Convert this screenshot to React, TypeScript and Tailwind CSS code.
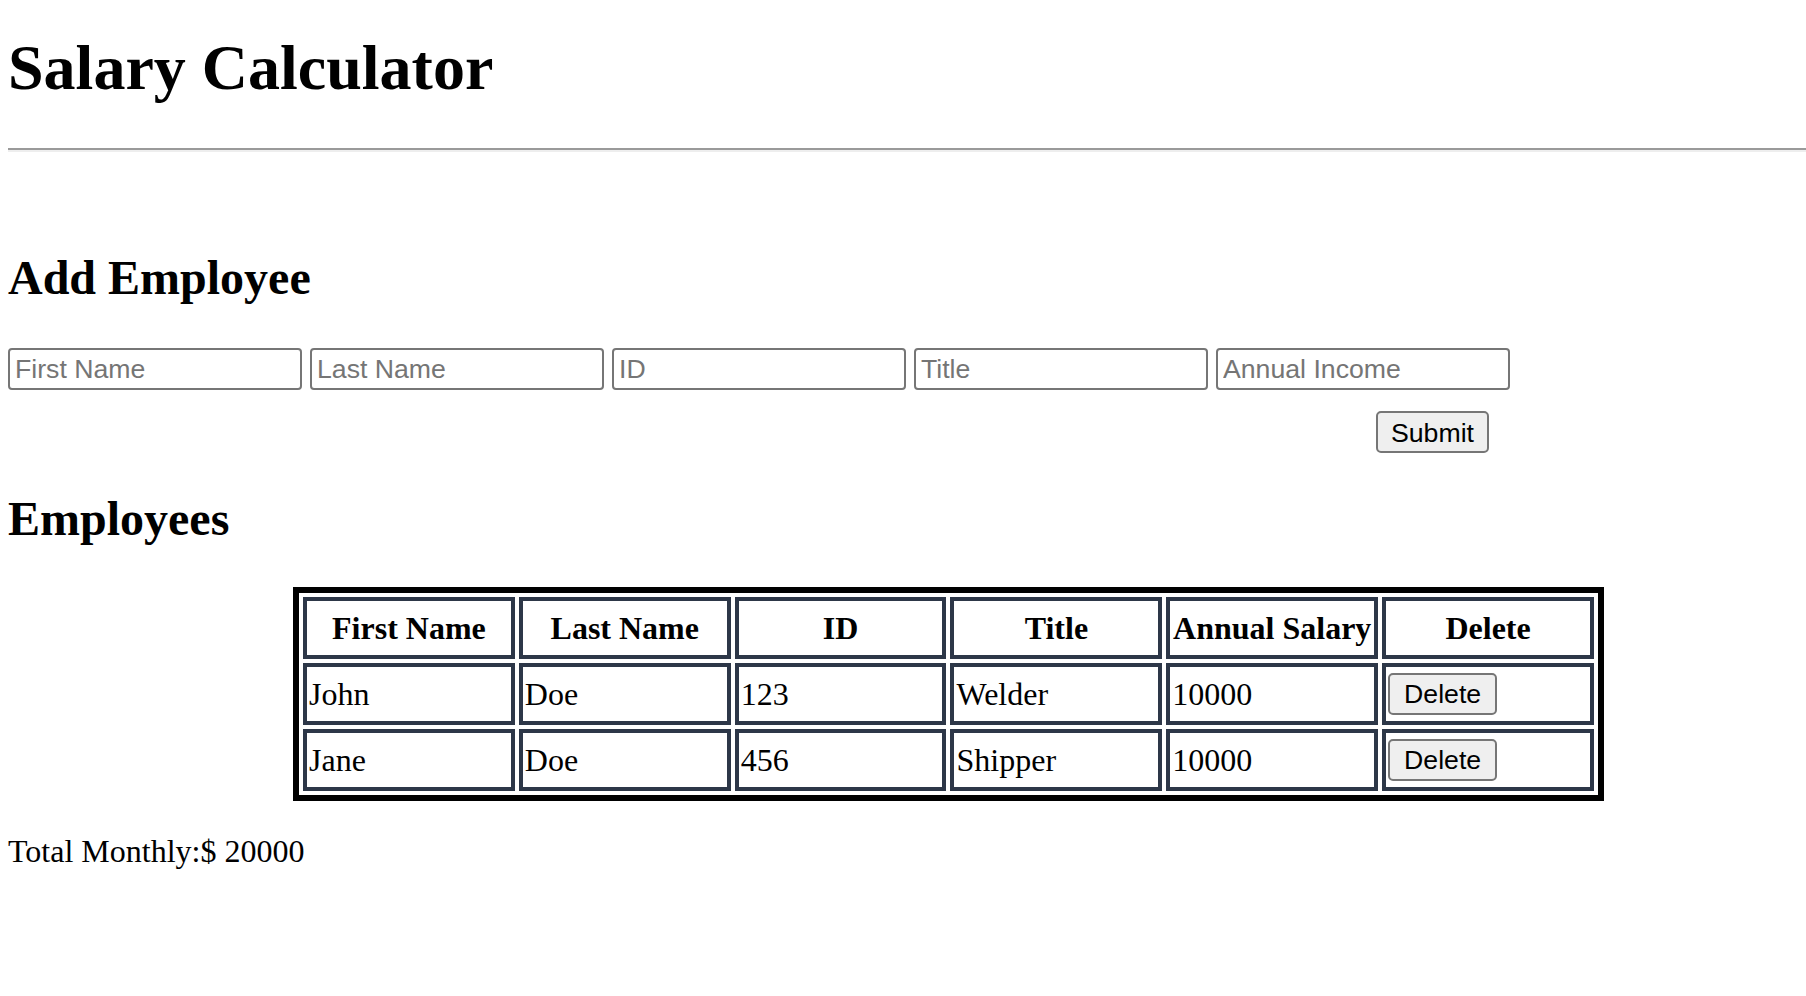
import { useState } from "react";

type Employee = {
  firstName: string;
  lastName: string;
  id: string;
  title: string;
  salary: number;
};

const fields = [
  { key: "firstName", label: "First Name" },
  { key: "lastName", label: "Last Name" },
  { key: "id", label: "ID" },
  { key: "title", label: "Title" },
  { key: "salary", label: "Annual Income" },
];

const columns = ["First Name", "Last Name", "ID", "Title", "Annual Salary", "Delete"];

const App = () => {
  const [employees, setEmployees] = useState<Employee[]>([
    { firstName: "John", lastName: "Doe", id: "123", title: "Welder", salary: 10000 },
    { firstName: "Jane", lastName: "Doe", id: "456", title: "Shipper", salary: 10000 },
  ]);
  const [form, setForm] = useState<Record<string, string>>({
    firstName: "",
    lastName: "",
    id: "",
    title: "",
    salary: "",
  });

  const handleSubmit = (e: React.FormEvent) => {
    e.preventDefault();
    if (!form.firstName) return;
    setEmployees([
      ...employees,
      {
        firstName: form.firstName,
        lastName: form.lastName,
        id: form.id,
        title: form.title,
        salary: Number(form.salary) || 0,
      },
    ]);
    setForm({ firstName: "", lastName: "", id: "", title: "", salary: "" });
  };

  const total = employees.reduce((sum, emp) => sum + emp.salary, 0);

  return (
    <div className="pl-[8px] pb-[60px] text-black font-['Liberation_Serif','Times_New_Roman',serif] text-[32px]">
      <h1 className="pt-[32px] text-[64px] leading-[72px] font-bold">Salary Calculator</h1>
      <hr className="mt-[44px] border-0 border-t-2 border-b-2 border-t-[#9a9a9a] border-b-[#eeeeee]" />

      <h2 className="mt-[98px] text-[48px] leading-[56px] font-bold">Add Employee</h2>

      <form onSubmit={handleSubmit} className="font-['Liberation_Sans',Arial,sans-serif]">
        <div className="mt-[42px] flex gap-[8px]">
          {fields.map((field) => (
            <input
              key={field.key}
              value={form[field.key]}
              onChange={(e) => setForm({ ...form, [field.key]: e.target.value })}
              placeholder={field.label}
              className="h-[42px] w-[294px] rounded-[4px] border-2 border-[#767676] bg-white px-[5px] text-[26.67px] text-black placeholder:text-[#757575] outline-none"
            />
          ))}
        </div>
        <button
          type="submit"
          className="mt-[21px] ml-[1368px] h-[42px] w-[113px] rounded-[5px] border-2 border-[#767676] bg-[#efefef] text-[26.67px] text-black"
        >
          Submit
        </button>
      </form>

      <h2 className="mt-[36px] text-[48px] leading-[56px] font-bold">Employees</h2>

      <table className="mt-[40px] ml-[285px] w-[1311px] table-fixed border-separate border-spacing-[4px] border-[6px] border-black">
        <thead>
          <tr>
            {columns.map((col) => (
              <th key={col} className="h-[62px] border-4 border-[#2d3748] p-[2px] text-center font-bold leading-[37px] whitespace-nowrap">
                {col}
              </th>
            ))}
          </tr>
        </thead>
        <tbody>
          {employees.map((emp, index) => (
            <tr key={index}>
              <td className="h-[62px] border-4 border-[#2d3748] p-[2px] leading-[37px]">{emp.firstName}</td>
              <td className="h-[62px] border-4 border-[#2d3748] p-[2px] leading-[37px]">{emp.lastName}</td>
              <td className="h-[62px] border-4 border-[#2d3748] p-[2px] leading-[37px]">{emp.id}</td>
              <td className="h-[62px] border-4 border-[#2d3748] p-[2px] leading-[37px]">{emp.title}</td>
              <td className="h-[62px] border-4 border-[#2d3748] p-[2px] leading-[37px]">{emp.salary}</td>
              <td className="h-[62px] border-4 border-[#2d3748] p-[2px] leading-[37px]">
                <button
                  onClick={() => setEmployees(employees.filter((_, i) => i !== index))}
                  className="block h-[42px] w-[109px] rounded-[5px] border-2 border-[#767676] bg-[#efefef] font-['Liberation_Sans',Arial,sans-serif] text-[26.67px] leading-none text-black"
                >
                  Delete
                </button>
              </td>
            </tr>
          ))}
        </tbody>
      </table>

      <p className="mt-[32px] leading-[37px]">Total Monthly:$ {total}</p>
    </div>
  );
};

export default App;
